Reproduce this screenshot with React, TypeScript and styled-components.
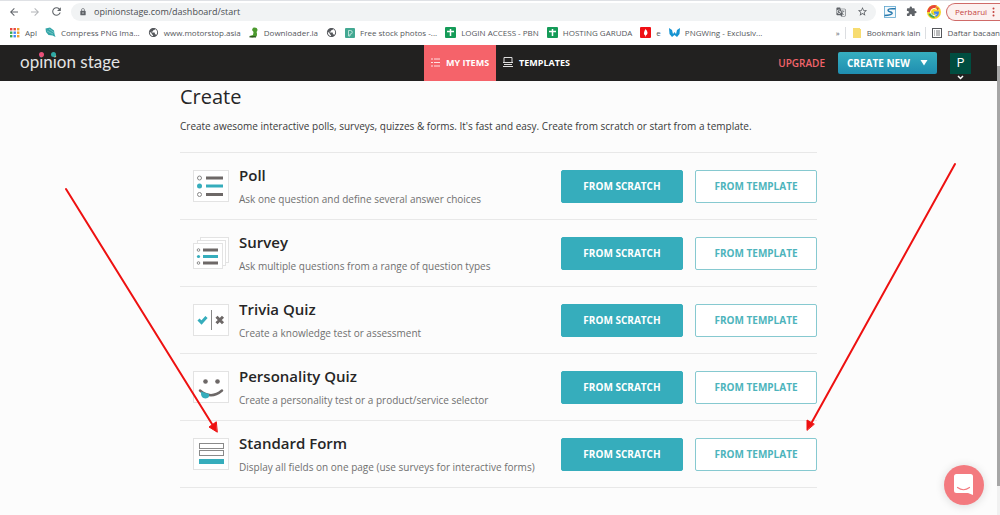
import React from "react";
import styled, { createGlobalStyle, css } from "styled-components";
import {
  MdArrowBack,
  MdArrowForward,
  MdRefresh,
  MdLock,
  MdStarBorder,
  MdGTranslate,
  MdExtension,
  MdPublic,
} from "react-icons/md";

const sans = `"Open Sans", "Noto Sans", sans-serif`;
const teal = "#36adbc";

const GlobalStyle = createGlobalStyle`
  *, *::before, *::after { box-sizing: border-box; }
  body { margin: 0; background: #fcfcfc; font-family: ${sans}; color: #262626; }
  a { color: inherit; text-decoration: none; }
  button { font: inherit; cursor: pointer; }
  ul { list-style: none; margin: 0; padding: 0; }
  h1, h2, p { margin: 0; font-weight: 400; }
  svg { display: block; flex: none; }
`;

const Window = styled.div`
  position: relative;
  min-height: 100vh;
  display: flex;
  flex-direction: column;
  overflow: hidden;
`;

/* Browser chrome */
const BrowserBar = styled.div`
  display: flex;
  align-items: center;
  height: 22px;
  padding-left: 8px;
  background: #fff;
  border-top: 1px solid #dfe1e5;
  color: #5f6368;
`;

const NavButton = styled.button<{ $dim?: boolean }>`
  width: 21px;
  height: 18px;
  padding: 0;
  border: 0;
  background: none;
  display: flex;
  align-items: center;
  justify-content: flex-start;
  color: ${(p) => (p.$dim ? "#b4b6b9" : "#5f6368")};
`;

const AddressBar = styled.div`
  flex: 1;
  display: flex;
  align-items: center;
  gap: 7px;
  height: 18px;
  padding: 0 8px;
  border-radius: 9px;
  background: #f1f3f4;
`;

const UrlInput = styled.input`
  flex: 1;
  min-width: 0;
  height: 16px;
  padding: 0;
  border: 0;
  outline: 0;
  background: none;
  font: 9px/16px ${sans};
  color: #4a4d51;
`;

const AddressIcons = styled.div`
  display: flex;
  gap: 11px;
  align-items: center;
`;

const Extensions = styled.div`
  display: flex;
  align-items: center;
  gap: 10px;
  padding: 0 5px 0 8px;
`;

const UpdateButton = styled.button`
  display: flex;
  align-items: center;
  justify-content: space-between;
  width: 54px;
  height: 18px;
  padding: 0 5px 0 8px;
  border: 1px solid #cf6a68;
  border-right: 0;
  border-radius: 9px 0 0 9px;
  background: #fcf1f0;
  color: #c5443f;
  font-size: 8px;
`;

const Bookmarks = styled.nav`
  display: flex;
  align-items: center;
  height: 23px;
  padding: 0 0 2px 10px;
  background: #fff;
  color: #55585c;
  font-size: 8px;
  line-height: 12px;
  white-space: nowrap;
`;

const BookmarkList = styled.ul`
  flex: 1;
  display: flex;
  gap: 8px;
`;

const Bookmark = styled.a`
  display: flex;
  align-items: center;
  gap: 5px;
`;

const OtherBookmarks = styled.div`
  display: flex;
  align-items: center;
`;

const Divided = styled(Bookmark)`
  margin-left: 5px;
  padding-left: 6px;
  border-left: 1px solid #dcdee1;
`;

/* Page */
const Viewport = styled.div`
  flex: 1;
  display: flex;
`;

const Page = styled.div`
  flex: 1;
  min-width: 0;
`;

const ScrollTrack = styled.div`
  width: 3px;
  padding-top: 21px;
  background: #f1f1f1;
`;

const ScrollThumb = styled.div`
  height: 420px;
  background: #a6a6a6;
`;

const Header = styled.header`
  display: grid;
  grid-template-columns: 1fr auto 1fr;
  height: 36px;
  background: #222120;
  color: #fff;
`;

const Logo = styled.a`
  position: relative;
  align-self: center;
  justify-self: start;
  margin-left: 20px;
  padding-bottom: 2px;
  font: 400 17px/22px Lato, sans-serif;
  color: #e4e4e4;
`;

const LogoDot = styled.span<{ $x: number; $color: string }>`
  position: absolute;
  top: 1px;
  left: ${(p) => p.$x}px;
  width: 5px;
  height: 5px;
  border-radius: 50%;
  background: ${(p) => p.$color};
`;

const Tabs = styled.nav`
  display: flex;
  margin-left: 4px;
`;

const Tab = styled.a<{ $active?: boolean }>`
  display: flex;
  align-items: center;
  gap: 6px;
  padding: 0 7px 2px;
  font-size: 9px;
  font-weight: 700;
  background: ${(p) => (p.$active ? "#f5636a" : "transparent")};
`;

const Actions = styled.div`
  display: flex;
  align-items: center;
  justify-content: flex-end;
  gap: 13px;
  padding-right: 26px;
`;

const Upgrade = styled.a`
  color: #f2646b;
  font-size: 10px;
  font-weight: 600;
`;

const CreateButton = styled.button`
  display: flex;
  align-items: center;
  justify-content: space-between;
  width: 99px;
  height: 22px;
  padding: 0 9px;
  border: 0;
  border-radius: 2px;
  background: linear-gradient(#36aebf, #1f8db0);
  color: #fff;
  font-size: 10px;
  font-weight: 700;
`;

const Account = styled.button`
  position: relative;
  width: 21px;
  height: 21px;
  padding: 0;
  border: 0;
  background: #004d40;
  color: #fff;
  font: 12px/21px Roboto, sans-serif;
`;

const AccountCaret = styled.svg`
  position: absolute;
  left: 7px;
  top: 22px;
`;

const Main = styled.main`
  max-width: 637px;
  margin: 0 auto;
  padding: 2px 0 27px;
`;

const Title = styled.h1`
  font-size: 20px;
  line-height: 28px;
`;

const Intro = styled.p`
  margin: 6px 0 17px;
  font-size: 10px;
  line-height: 18px;
  color: #3a3a3a;
`;

const TypeList = styled.ul`
  border-top: 1px solid #e8e8e8;
`;

const TypeRow = styled.li`
  display: flex;
  align-items: center;
  height: 67px;
  padding-left: 13px;
  border-bottom: 1px solid #e8e8e8;
`;

const TypeText = styled.div`
  flex: 1;
  min-width: 0;
  padding-left: 10px;
`;

const TypeName = styled.h2`
  font-size: 15px;
  line-height: 22px;
  font-weight: 600;
`;

const TypeDescription = styled.p`
  margin-top: 3px;
  font-size: 10px;
  line-height: 20px;
  color: #707070;
`;

const Choices = styled.div`
  display: flex;
  gap: 12px;
`;

const ChoiceButton = styled.button<{ $filled?: boolean }>`
  width: 122px;
  height: 33px;
  padding: 0 0 1px;
  border: 1px solid ${(p) => (p.$filled ? teal : "#86c9d0")};
  border-radius: 2px;
  font-size: 10px;
  font-weight: 700;
  ${(p) =>
    p.$filled
      ? css`
          background: ${teal};
          color: #fff;
        `
      : css`
          background: #fff;
          color: #4db4bc;
        `}
`;

const ChatButton = styled.button`
  position: fixed;
  right: 16px;
  bottom: 10px;
  width: 40px;
  height: 40px;
  padding: 0;
  border: 0;
  border-radius: 50%;
  display: flex;
  align-items: center;
  justify-content: center;
  background: #f37a7f;
  box-shadow: 0 1px 10px rgba(0, 0, 0, 0.14);
`;

const Annotations = styled.svg`
  position: absolute;
  top: 0;
  left: 50%;
  margin-left: -500px;
  pointer-events: none;
`;

/* Bookmark glyphs */
const AppsIcon = () => (
  <svg width="10" height="10" viewBox="0 0 10 10">
    {["#e8453c", "#e8453c", "#f0a030", "#3aa757", "#4285f4", "#f0a030", "#3aa757", "#4285f4", "#f0a030"].map((c, i) => (
      <rect key={i} x={(i % 3) * 3.5} y={Math.floor(i / 3) * 3.5} width="2.4" height="2.4" fill={c} />
    ))}
  </svg>
);
const CompressIcon = () => (
  <svg width="11" height="11" viewBox="0 0 11 11">
    <path d="M.5 1.500 5 .5 9 3.500 9.500 7 10.500 10 7.500 8.500 3.500 8 1 5Z" fill="#35a5a8" />
    <path d="M2 4 8 7M4 2 9 5.500" stroke="#9adbd8" strokeWidth=".6" />
  </svg>
);
const LizardIcon = () => (
  <svg width="10" height="11" viewBox="0 0 10 11">
    <path d="M4 .8Q8 0 8.500 2.500 8.500 4 7.500 5 8.500 7 7.500 9.500L3 10.500.5 9 4 8 4.500 5 3 3Z" fill="#4c9a2e" />
    <path d="M.5 9.800H7" stroke="#28501a" strokeWidth="1.300" />
  </svg>
);
const PexelsIcon = () => (
  <svg width="10" height="10" viewBox="0 0 10 10">
    <rect width="10" height="10" rx="1" fill="#43a892" />
    <path d="M3.500 8V2.500H5.500A1.600 1.600 0 0 1 5.500 6H5V8Z" fill="none" stroke="#d5f0e9" strokeWidth=".8" />
  </svg>
);
const SheetIcon = () => (
  <svg width="11" height="11" viewBox="0 0 11 11">
    <rect width="11" height="11" rx="1" fill="#159b58" />
    <path d="M2 4.500H9M5.500 2V9" stroke="#fff" strokeWidth="1.500" />
  </svg>
);
const FlameIcon = () => (
  <svg width="11" height="11" viewBox="0 0 11 11">
    <rect width="11" height="11" rx="1" fill="#f00f14" />
    <path d="M5.500 2Q8.500 5 7 7.500L5.800 8.500V9.500H5.200V8.500Q2.500 7 5.500 2Z" fill="#fff" />
  </svg>
);
const WingIcon = () => (
  <svg width="11" height="11" viewBox="0 0 11 11">
    <path d="M0 1 3 3 4 7 5.500 5 7 7 8 3 11 1 10.500 7 8 10 5.500 8 3 10 .5 7Z" fill="#1694d2" />
  </svg>
);
const FolderIcon = () => (
  <svg width="10" height="10" viewBox="0 0 10 10">
    <path d="M1 0H8V1H9V10H1Z" fill="#f7dc70" />
  </svg>
);
const ReadingIcon = () => (
  <svg width="10" height="10" viewBox="0 0 10 10" stroke="#55585c" fill="none">
    <rect x=".5" y=".5" width="9" height="9" />
    <path d="M2 3H3M4 3H8M2 5H3M4 5H8M2 7H3M4 7H8" strokeWidth=".8" />
  </svg>
);
const SwirlIcon = () => (
  <svg width="12" height="12" viewBox="0 0 12 12">
    <rect x=".5" y=".5" width="11" height="11" fill="#f4f9fc" stroke="#5fa6cf" strokeWidth=".8" />
    <path d="M11.500 2.800Q4 2.200 4 4.300 4 5.500 6.500 6 8.500 6.500 8 7.600 7 9 .5 9.500" fill="none" stroke="#2779ad" strokeWidth="1.500" />
  </svg>
);
const ProfileIcon = () => (
  <svg width="14" height="14" viewBox="0 0 14 14">
    <circle cx="7" cy="7" r="7" fill="#f4d626" />
    <path d="M1 4A7 7 0 0 1 10 .7L8 3 4 4 3 7H0Z" fill="#e8453c" />
    <path d="M1.500 9 5 8 8 13Q3 13 1.500 9Z" fill="#3aa757" />
    <path d="M7 6.500H12Q12 10.500 9 12L7 10 9 8.500H7Z" fill="#4285f4" />
    <path d="M9.500 4.500A3.500 3.500 0 1 0 9.500 9.500" fill="none" stroke="#fff" strokeWidth=".9" />
    <path d="M9 2 12 3 10.500 5.500Z" fill="#e8453c" />
  </svg>
);

/* Header glyphs */
const ItemsIcon = () => (
  <svg width="9" height="9" viewBox="0 0 9 9" stroke="#ffe1e2" fill="none">
    <path d="M0 1H2M3 1H9M0 4.500H2M3 4.500H9M0 8H2M3 8H9" />
  </svg>
);
const TemplatesIcon = () => (
  <svg width="10" height="10" viewBox="0 0 10 10" stroke="#ddd" fill="none">
    <path d="M1 5V.5H9V5M0 5.500H10M1 7.500H9M0 9.500H10" />
  </svg>
);

/* Content type glyphs, all on a 36 by 32 card */
const Card = ({ children }: { children: React.ReactNode }) => (
  <svg width="36" height="32" viewBox="0 0 36 32" aria-hidden="true">
    <rect x=".5" y=".5" width="35" height="31" fill="#fff" stroke="#e3e3e3" />
    {children}
  </svg>
);
const PollIcon = () => (
  <Card>
    <path d="M13 8H30M13 24.500H30" stroke="#6d6867" strokeWidth="3" />
    <path d="M13 16H30" stroke={teal} strokeWidth="3" />
    <g fill="none" stroke="#888">
      <circle cx="6.500" cy="8" r="2" />
      <circle cx="6.500" cy="24.500" r="2" />
    </g>
    <circle cx="6.500" cy="16" r="2.500" fill={teal} />
  </Card>
);
const SurveyIcon = () => (
  <svg width="36" height="32" viewBox="0 0 36 32" aria-hidden="true">
    <g fill="#fff" stroke="#e3e3e3">
      <rect x="7.500" y=".5" width="28" height="25" />
      <rect x="4.500" y="3.500" width="28" height="25" />
      <rect x=".5" y="6.500" width="29" height="25" />
    </g>
    <path d="M10 13H25M10 26H25" stroke="#6d6867" strokeWidth="3" />
    <path d="M10 19.500H25" stroke={teal} strokeWidth="3" />
    <g fill="none" stroke="#888">
      <circle cx="5.500" cy="13" r="1.300" />
      <circle cx="5.500" cy="26" r="1.300" />
    </g>
    <circle cx="5.500" cy="19.500" r="1.600" fill={teal} />
  </svg>
);
const TriviaIcon = () => (
  <Card>
    <path d="M5.500 15.500 8.500 18.500 13.500 13" fill="none" stroke={teal} strokeWidth="3" />
    <path d="M18.500 6V26" stroke="#888" />
    <path d="M23.500 12.800 30 19.200M30 12.800 23.500 19.200" stroke="#6d6867" strokeWidth="3" />
  </Card>
);
const SmileIcon = () => (
  <Card>
    <circle cx="12.500" cy="10.500" r="2.300" fill="#6d6867" />
    <circle cx="24.500" cy="10.500" r="2.300" fill="#6d6867" />
    <path d="M7 19.500Q18 29 29 19.500" fill="none" stroke="#6d6867" strokeWidth="2.500" strokeLinecap="round" />
    <path d="M8 20.500Q7.500 27.500 12.500 27.500 17 27 16 23Z" fill={teal} />
  </Card>
);
const FormIcon = () => (
  <Card>
    <g fill="#fff" stroke="#8a8a8a">
      <rect x="6.500" y="5.500" width="24" height="5" />
      <rect x="6.500" y="12.500" width="24" height="5" />
    </g>
    <rect x="6" y="21" width="25" height="5" fill={teal} />
  </Card>
);

const bookmarks: { label: string; icon: React.ReactNode }[] = [
  { label: "Apl", icon: <AppsIcon /> },
  { label: "Compress PNG Ima...", icon: <CompressIcon /> },
  { label: "www.motorstop.asia", icon: <MdPublic size={11} /> },
  { label: "Downloader.la", icon: <LizardIcon /> },
  { label: "", icon: <MdPublic size={11} /> },
  { label: "Free stock photos -...", icon: <PexelsIcon /> },
  { label: "LOGIN ACCESS - PBN", icon: <SheetIcon /> },
  { label: "HOSTING GARUDA", icon: <SheetIcon /> },
  { label: "e", icon: <FlameIcon /> },
  { label: "PNGWing - Exclusiv...", icon: <WingIcon /> },
];

const types = [
  { name: "Poll", text: "Ask one question and define several answer choices", Icon: PollIcon },
  { name: "Survey", text: "Ask multiple questions from a range of question types", Icon: SurveyIcon },
  { name: "Trivia Quiz", text: "Create a knowledge test or assessment", Icon: TriviaIcon },
  { name: "Personality Quiz", text: "Create a personality test or a product/service selector", Icon: SmileIcon },
  { name: "Standard Form", text: "Display all fields on one page (use surveys for interactive forms)", Icon: FormIcon },
];

export default function App() {
  return (
    <Window>
      <GlobalStyle />
      <BrowserBar>
        <NavButton aria-label="Back"><MdArrowBack size={12} /></NavButton>
        <NavButton aria-label="Forward" $dim><MdArrowForward size={12} /></NavButton>
        <NavButton aria-label="Reload"><MdRefresh size={13} /></NavButton>
        <AddressBar>
          <MdLock size={8} />
          <UrlInput aria-label="Address" defaultValue="opinionstage.com/dashboard/start" />
          <AddressIcons>
            <MdGTranslate size={10} />
            <MdStarBorder size={11} />
          </AddressIcons>
        </AddressBar>
        <Extensions>
          <SwirlIcon />
          <MdExtension size={11} />
          <ProfileIcon />
        </Extensions>
        <UpdateButton>
          Perbarui
          <svg width="3" height="10" viewBox="0 0 3 10" fill="#c5443f">
            <circle cx="1.500" cy="1.500" r="1" />
            <circle cx="1.500" cy="5" r="1" />
            <circle cx="1.500" cy="8.500" r="1" />
          </svg>
        </UpdateButton>
      </BrowserBar>
      <Bookmarks aria-label="Bookmarks">
        <BookmarkList>
          {bookmarks.map((b, i) => (
            <li key={i}>
              <Bookmark href="#" aria-label={b.label || "Site"}>
                {b.icon}
                {b.label && <span>{b.label}</span>}
              </Bookmark>
            </li>
          ))}
        </BookmarkList>
        <OtherBookmarks>
          <span>»</span>
          <Divided href="#"><FolderIcon />Bookmark lain</Divided>
          <Divided href="#"><ReadingIcon />Daftar bacaan</Divided>
        </OtherBookmarks>
      </Bookmarks>
      <Viewport>
        <Page>
          <Header>
            <Logo href="#">
              opinion stage
              <LogoDot $x={19} $color="#e8507a" />
              <LogoDot $x={31} $color="#2fa9a4" />
            </Logo>
            <Tabs>
              <Tab href="#" $active><ItemsIcon />MY ITEMS</Tab>
              <Tab href="#"><TemplatesIcon />TEMPLATES</Tab>
            </Tabs>
            <Actions>
              <Upgrade href="#">UPGRADE</Upgrade>
              <CreateButton>
                CREATE NEW
                <svg width="8" height="6" viewBox="0 0 8 6" fill="#fff"><path d="M.5 0H7.500L4 5.500Z" /></svg>
              </CreateButton>
              <Account aria-label="Account">
                P
                <AccountCaret width="7" height="5" viewBox="0 0 7 5" fill="none" stroke="#fff" strokeWidth="1.500">
                  <path d="M1 1 3.500 3.500 6 1" />
                </AccountCaret>
              </Account>
            </Actions>
          </Header>
          <Main>
            <Title>Create</Title>
            <Intro>
              Create awesome interactive polls, surveys, quizzes &amp; forms. It's fast and easy. Create from scratch or
              start from a template.
            </Intro>
            <TypeList>
              {types.map(({ name, text, Icon }) => (
                <TypeRow key={name}>
                  <Icon />
                  <TypeText>
                    <TypeName>{name}</TypeName>
                    <TypeDescription>{text}</TypeDescription>
                  </TypeText>
                  <Choices>
                    <ChoiceButton $filled>FROM SCRATCH</ChoiceButton>
                    <ChoiceButton>FROM TEMPLATE</ChoiceButton>
                  </Choices>
                </TypeRow>
              ))}
            </TypeList>
          </Main>
        </Page>
        <ScrollTrack>
          <ScrollThumb />
        </ScrollTrack>
      </Viewport>
      <Annotations width="1000" height="515" viewBox="0 0 1000 515" aria-hidden="true">
        <g stroke="#ee1111" strokeWidth="2" fill="#ee1111" strokeLinecap="round">
          <path d="M66 189 212 424M955 164 812 422" />
          <path d="M217 432 209 427 216 422ZM807 430 807 420 814 424Z" strokeWidth="1" />
        </g>
      </Annotations>
      <ChatButton aria-label="Open chat">
        <svg width="20" height="22" viewBox="0 0 20 22">
          <path d="M2.500 0H16.500Q19 0 19 2.500V21L14 19H2.500Q0 19 0 16.500V2.500Q0 0 2.500 0Z" fill="#fff" />
          <path d="M3.500 13.500Q9.500 18 15.500 13.500" fill="none" stroke="#f37a7f" strokeWidth="1.200" strokeLinecap="round" />
        </svg>
      </ChatButton>
    </Window>
  );
}
